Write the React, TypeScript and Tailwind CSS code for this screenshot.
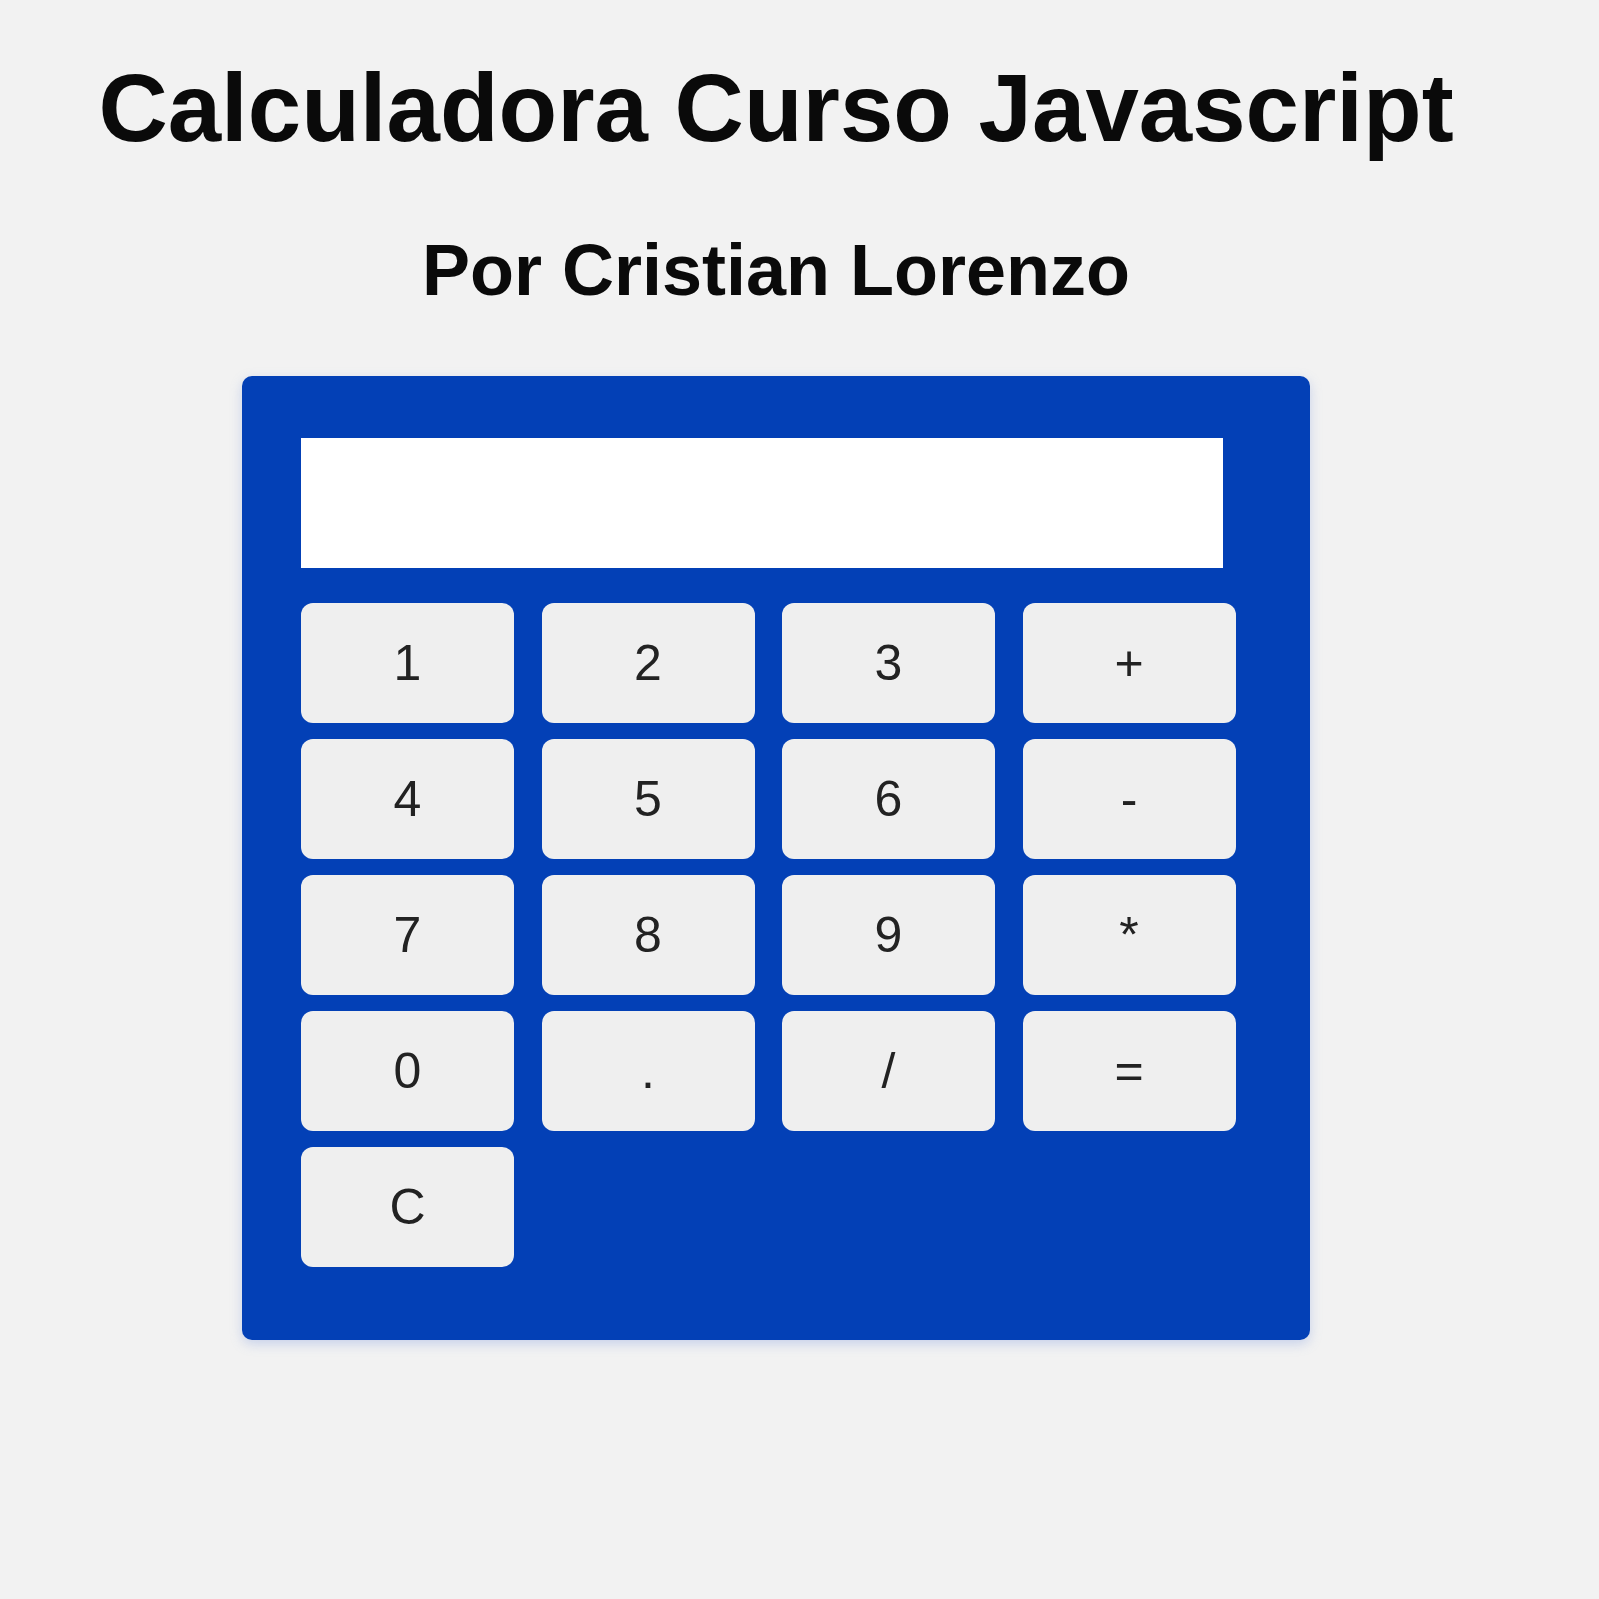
const keys = ["1", "2", "3", "+", "4", "5", "6", "-", "7", "8", "9", "*", "0", ".", "/", "=", "C"];

function CalcButton({ label }: { label: string }) {
    return (
        <button className="w-[213px] h-[120px] rounded-[12px] bg-[#efefef] text-[50px] leading-none text-[#222]">
            {label}
        </button>
    );
}

function App() {
    return (
        <div className="min-h-[1599px] bg-[#f2f2f2] font-['Liberation_Sans',Arial,sans-serif]">
            <div className="w-[1552px] flex flex-col items-center pt-[60px]">
                <h1 className="text-[96px] font-bold leading-none text-[#0a0a0a]">Calculadora Curso Javascript</h1>
                <h2 className="mt-[78px] text-[72px] font-bold leading-none text-[#0a0a0a]">Por Cristian Lorenzo</h2>

                <div className="mt-[70px] w-[1068px] h-[964px] rounded-[10px] bg-[#0340b6] pl-[59px] pt-[62px] pr-[75px] pb-[73px] shadow-[0_4px_12px_rgba(120,150,220,0.35)]">
                    <div className="w-[922px] h-[130px] bg-white" />
                    <div className="mt-[35px] grid grid-cols-[repeat(4,213px)] gap-x-[27.5px] gap-y-[16px]">
                        {keys.map((k) => (
                            <CalcButton key={k} label={k} />
                        ))}
                    </div>
                </div>
            </div>
        </div>
    );
}

export default App;
